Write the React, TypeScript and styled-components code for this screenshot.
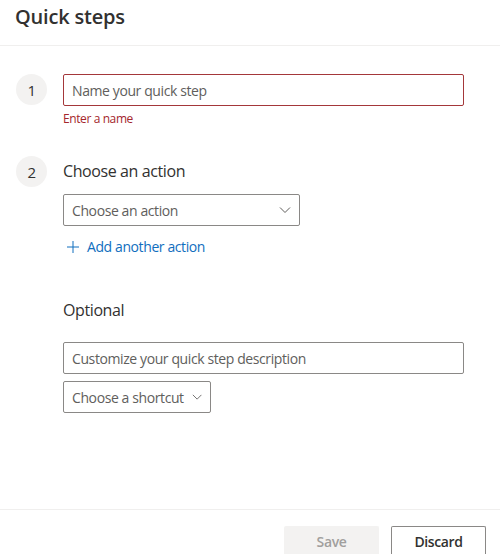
import React from "react";
import styled, { createGlobalStyle } from "styled-components";

const GlobalStyle = createGlobalStyle`
  html, body {
    margin: 0;
    padding: 0;
    background: #ffffff;
    font-family: "Open Sans", "Noto Sans", sans-serif;
    color: #323130;
  }
  button, input {
    letter-spacing: inherit;
  }
`;

const Panel = styled.div`
  width: 500px;
  height: 554px;
  display: flex;
  flex-direction: column;
  overflow: hidden;
  background: #fff;
  letter-spacing: -0.4px;
`;

const Header = styled.div`
  height: 46px;
  padding: 0 15px;
  border-bottom: 1px solid #f0efee;
  box-sizing: border-box;
`;

const Title = styled.h1`
  margin: 0;
  font-size: 20px;
  font-weight: 600;
  line-height: 34px;
  letter-spacing: -0.2px;
  color: #323130;
`;

const Body = styled.div`
  flex: 1;
  padding: 28px 36px 0 16px;
  display: flex;
  flex-direction: column;
`;

const Step = styled.div<{ $gap?: number }>`
  display: flex;
  gap: 16px;
  margin-bottom: ${(p) => p.$gap ?? 0}px;
`;

const Badge = styled.div`
  width: 31px;
  height: 31px;
  flex: none;
  border-radius: 50%;
  background: #f3f2f1;
  display: flex;
  align-items: center;
  justify-content: center;
  font-size: 15px;
  color: #323130;
`;

const Column = styled.div`
  flex: 1;
  display: flex;
  flex-direction: column;
`;

const Field = styled.input<{ $error?: boolean }>`
  box-sizing: border-box;
  width: 100%;
  height: 32px;
  border: 1px solid ${(p) => (p.$error ? "#a4373a" : "#8a8886")};
  border-radius: 2px;
  padding: 0 8px;
  font-family: inherit;
  font-size: 14px;
  color: #323130;
  outline: none;
  &::placeholder {
    color: #605e5c;
  }
`;

const ErrorText = styled.div`
  font-size: 12px;
  color: #a4262c;
  margin-top: 4px;
  line-height: 18px;
`;

const Label = styled.div`
  font-size: 16px;
  line-height: 31px;
  color: #323130;
`;

const Dropdown = styled.button<{ $width: number }>`
  box-sizing: border-box;
  width: ${(p) => p.$width}px;
  height: 32px;
  border: 1px solid #8a8886;
  border-radius: 2px;
  background: #fff;
  padding: 0 8px;
  display: flex;
  align-items: center;
  justify-content: space-between;
  gap: 8px;
  white-space: nowrap;
  font-family: inherit;
  font-size: 14px;
  color: #605e5c;
  cursor: pointer;
`;

const Chevron = () => (
  <svg width="12" height="12" viewBox="0 0 12 12" fill="none">
    <path d="M1 3.5 L6 8.5 L11 3.5" stroke="#605e5c" strokeWidth="1" />
  </svg>
);

const LinkButton = styled.button`
  display: flex;
  align-items: center;
  gap: 8px;
  background: none;
  border: none;
  padding: 0 0 0 4px;
  margin-top: 11px;
  font-family: inherit;
  font-size: 14px;
  color: #106ebe;
  cursor: pointer;
  align-self: flex-start;
`;

const Optional = styled.div`
  margin-left: 47px;
  margin-top: 39px;
  display: flex;
  flex-direction: column;
  gap: 7px;
`;

const OptionalLabel = styled(Label)`
  margin-bottom: 9px;
`;

const Footer = styled.div`
  height: 44px;
  border-top: 1px solid #f0efee;
  display: flex;
  justify-content: flex-end;
  align-items: flex-end;
  gap: 12px;
  padding: 0 14px 0 0;
`;

const Button = styled.button<{ $primary?: boolean }>`
  box-sizing: border-box;
  width: 95px;
  height: 28px;
  border-radius: 2px 2px 0 0;
  border: 1px solid ${(p) => (p.$primary ? "#f3f2f1" : "#8a8886")};
  border-bottom: none;
  background: ${(p) => (p.$primary ? "#f3f2f1" : "#fff")};
  color: ${(p) => (p.$primary ? "#a19f9d" : "#323130")};
  font-family: inherit;
  font-size: 14px;
  font-weight: 600;
  padding: 2px 0 0;
  display: flex;
  justify-content: center;
  align-items: center;
`;

export default function App() {
  return (
    <Panel>
      <GlobalStyle />
      <Header>
        <Title>Quick steps</Title>
      </Header>
      <Body>
        <Step $gap={28}>
          <Badge>1</Badge>
          <Column>
            <Field $error placeholder="Name your quick step" />
            <ErrorText>Enter a name</ErrorText>
          </Column>
        </Step>
        <Step>
          <Badge>2</Badge>
          <Column>
            <Label>Choose an action</Label>
            <Dropdown $width={237} style={{ marginTop: 7 }}>
              <span>Choose an action</span>
              <Chevron />
            </Dropdown>
            <LinkButton>
              <svg width="12" height="12" viewBox="0 0 12 12">
                <path d="M6 0 V12 M0 6 H12" stroke="#106ebe" strokeWidth="1" />
              </svg>
              Add another action
            </LinkButton>
          </Column>
        </Step>
        <Optional>
          <OptionalLabel>Optional</OptionalLabel>
          <Field placeholder="Customize your quick step description" />
          <Dropdown $width={148}>
            <span>Choose a shortcut</span>
            <Chevron />
          </Dropdown>
        </Optional>
      </Body>
      <Footer>
        <Button $primary>Save</Button>
        <Button>Discard</Button>
      </Footer>
    </Panel>
  );
}
